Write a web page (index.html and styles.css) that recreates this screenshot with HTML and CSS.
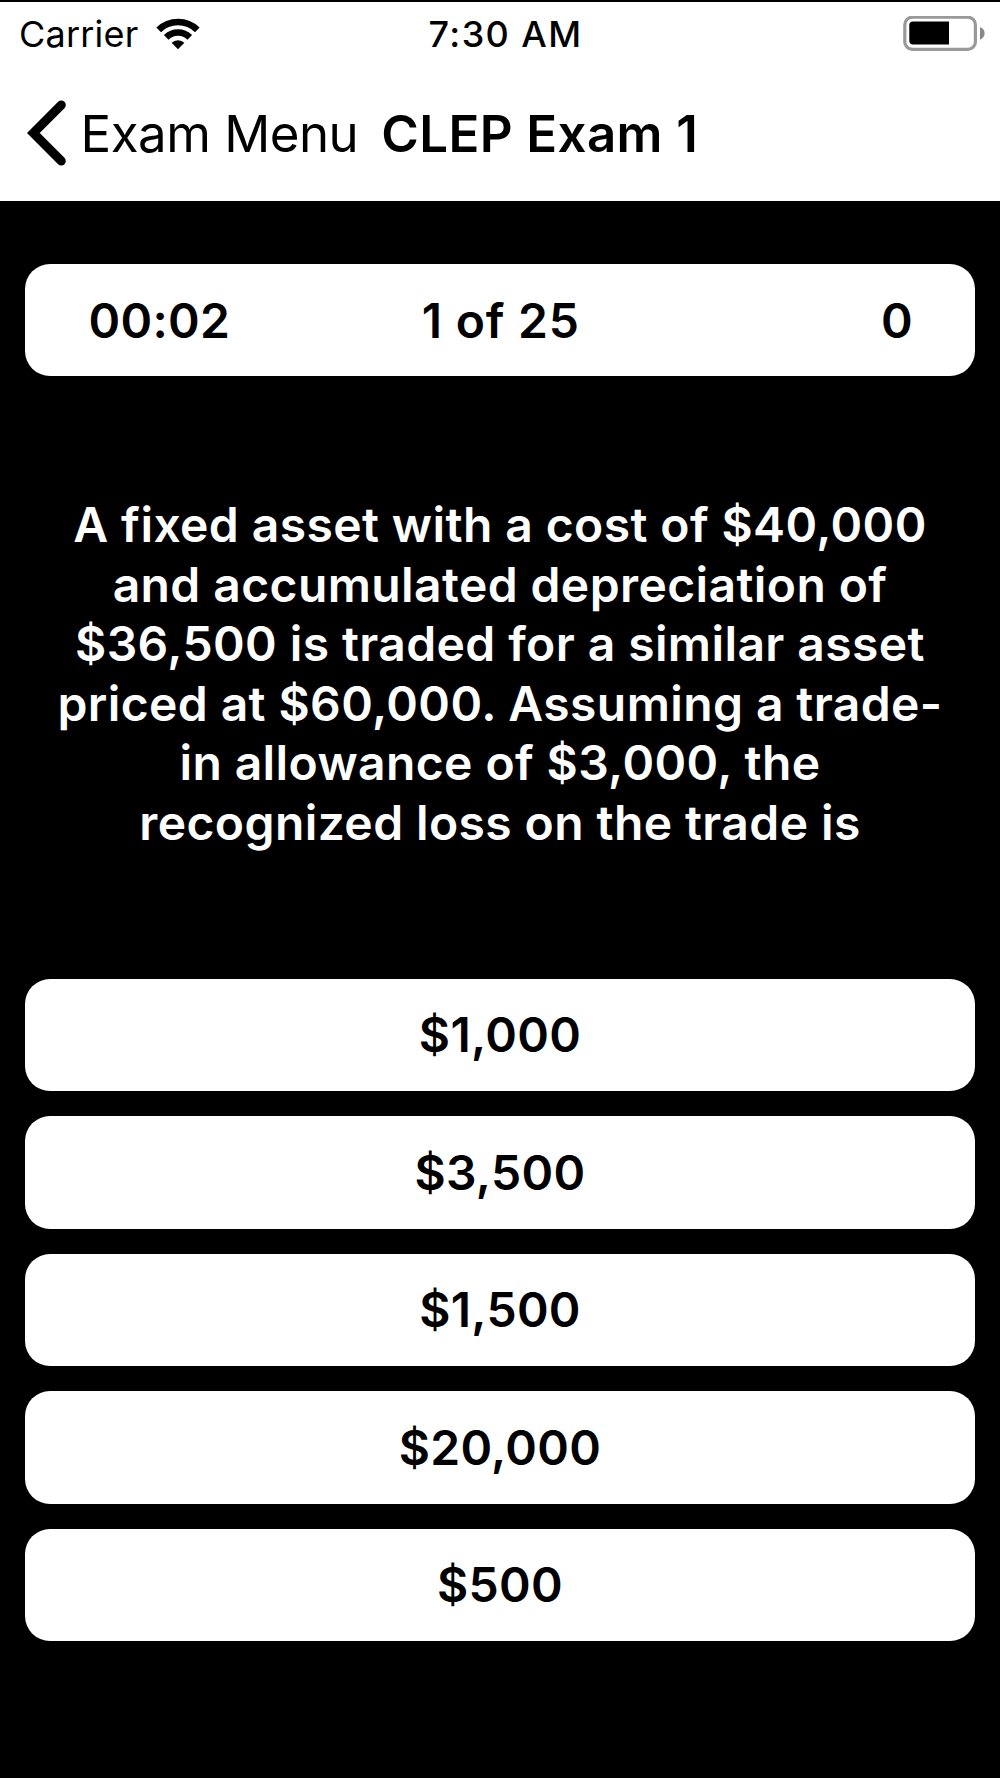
FILE: index.html
```html
<!DOCTYPE html>
<html lang="en">
<head>
    <meta charset="UTF-8">
    <meta name="viewport" content="width=device-width, initial-scale=1.0">
    <title>CLEP Exam 1</title>
    <link rel="stylesheet" href="styles.css">
</head>
<body>

    <header class="header">
        <div class="status-bar">
            <div class="status-left">
                <span class="carrier">Carrier</span>
                <svg class="wifi" width="44" height="32" viewBox="0 0 44 32">
                    <path d="M2.7 11.8A27.7 27.7 0 0 1 41.3 11.8" fill="none" stroke="#000" stroke-width="6.6"/>
                    <path d="M10.2 19.3A16.8 16.8 0 0 1 33.8 19.3" fill="none" stroke="#000" stroke-width="6.6"/>
                    <path d="M22 31.2L15.6 24.8A9 9 0 0 1 28.4 24.8Z"/>
                </svg>
            </div>
            <span class="clock">7:30 AM</span>
            <svg class="battery" width="83" height="36" viewBox="0 0 83 36">
                <rect x="2.8" y="1.2" width="70.6" height="32.2" rx="7.5" fill="none" stroke="#999" stroke-width="3.2"/>
                <path d="M47 5.6H11Q7.3 5.6 7.3 9.3V24.7Q7.3 28.4 11 28.4H47Z"/>
                <path d="M78 11Q82.6 13 82.6 17.3T78 23.8Z" fill="#888"/>
            </svg>
        </div>
        <nav class="nav-bar">
            <a class="back" href="#">
                <svg class="chevron" width="40" height="66" viewBox="0 0 40 66">
                    <path d="M34.3 5L6.3 33L34.3 61" fill="none" stroke="#000" stroke-width="9" stroke-linecap="round"/>
                </svg>
                <span class="back-label">Exam Menu</span>
            </a>
            <h1 class="title">CLEP Exam 1</h1>
        </nav>
    </header>

    <main class="exam">
        <div class="progress">
            <span class="timer">00:02</span>
            <span class="count">1 of 25</span>
            <span class="score">0</span>
        </div>

        <p class="question">
            A fixed asset with a cost of $40,000<br>
            and accumulated depreciation of<br>
            $36,500 is traded for a similar asset<br>
            priced at $60,000. Assuming a trade-<br>
            in allowance of $3,000, the<br>
            recognized loss on the trade is
        </p>

        <div class="answers">
            <button type="button">$1,000</button>
            <button type="button">$3,500</button>
            <button type="button">$1,500</button>
            <button type="button">$20,000</button>
            <button type="button">$500</button>
        </div>
    </main>

</body>
</html>
```
FILE: styles.css
```css
* {
    box-sizing: border-box;
}
body {
    margin: 0;
    height: 1778px;
    background-color: #000;
    color: #000;
    font-family: Inter, "Liberation Sans", sans-serif;
    overflow: hidden;
}
.header {
    height: 201px;
    border-top: 2px solid #000;
    background-color: #fff;
}
.status-bar {
    display: grid;
    grid-template-columns: 1fr auto 1fr;
    align-items: center;
    height: 63px;
    padding: 0 15px 0 19px;
    font-size: 36px;
    white-space: nowrap;
}
.status-left {
    display: flex;
    align-items: center;
    gap: 17.5px;
}
.carrier {
    letter-spacing: 0.2px;
}
.clock {
    padding-left: 7px;
    font-weight: 500;
    letter-spacing: 1.4px;
}
.battery {
    justify-self: end;
}
.nav-bar {
    display: flex;
    align-items: center;
    height: 136px;
    padding-left: 27px;
    font-size: 51px;
    white-space: nowrap;
}
.back {
    display: flex;
    align-items: center;
    gap: 13.5px;
    color: #000;
    text-decoration: none;
    letter-spacing: -0.5px;
}
.title {
    margin: 0 0 0 23px;
    font-size: 51px;
    font-weight: 600;
    letter-spacing: 0.4px;
}
.exam {
    padding: 63px 25px 0;
}
.progress {
    display: grid;
    grid-template-columns: 1fr auto 1fr;
    align-items: center;
    height: 112px;
    padding: 0 62px 0 63.5px;
    border-radius: 25px;
    background-color: #fff;
    font-size: 48px;
    font-weight: 600;
    letter-spacing: 0.3px;
}
.count {
    letter-spacing: 0.8px;
}
.score {
    text-align: right;
}
.question {
    margin: 119px 0 0;
    color: #fff;
    font-size: 48px;
    font-weight: 600;
    line-height: 59.5px;
    letter-spacing: 0.4px;
    text-align: center;
    white-space: nowrap;
}
.answers {
    display: flex;
    flex-direction: column;
    gap: 25px;
    margin-top: 126.5px;
}
.answers button {
    height: 112.5px;
    padding: 0;
    border: none;
    border-radius: 25px;
    background-color: #fff;
    color: #000;
    font-family: inherit;
    font-size: 48px;
    font-weight: 600;
    letter-spacing: 0.3px;
}
```
